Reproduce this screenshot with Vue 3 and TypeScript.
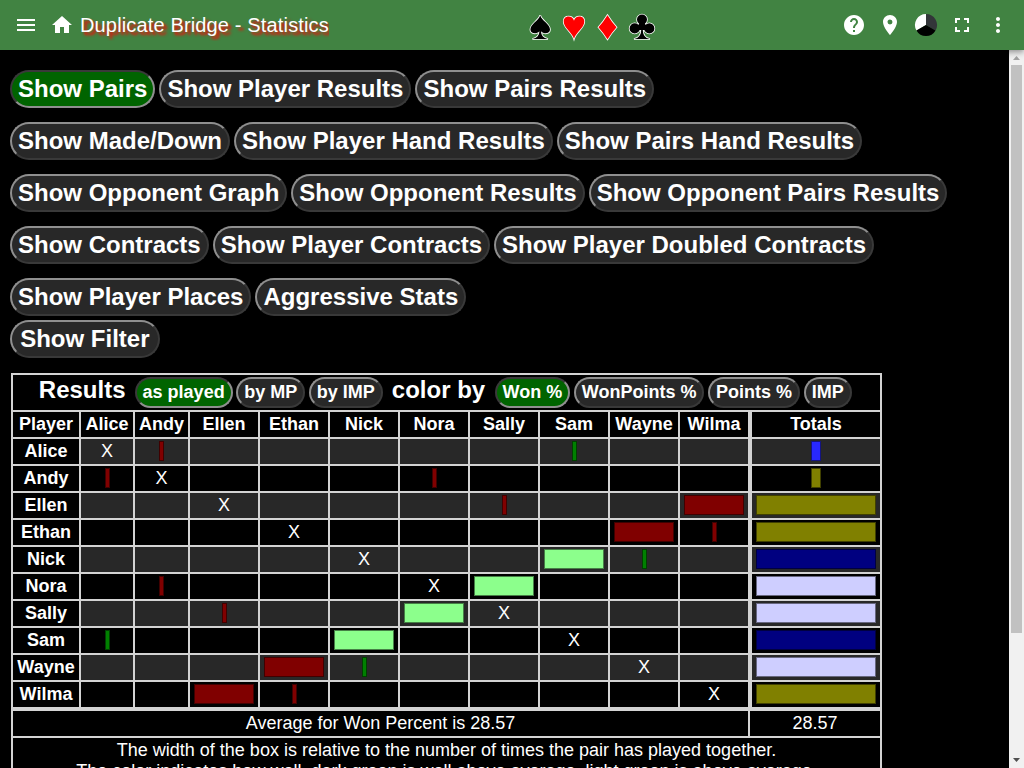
<script setup lang="ts">
interface Btn { label: string; active?: boolean }
interface Cell { kind: 'none' | 'self' | 'box'; width?: number; color?: string }
interface Row { name: string; cells: Cell[]; total: Cell }

const buttonRows: Btn[][] = [
  [{ label: 'Show Pairs', active: true }, { label: 'Show Player Results' }, { label: 'Show Pairs Results' }],
  [{ label: 'Show Made/Down' }, { label: 'Show Player Hand Results' }, { label: 'Show Pairs Hand Results' }],
  [{ label: 'Show Opponent Graph' }, { label: 'Show Opponent Results' }, { label: 'Show Opponent Pairs Results' }],
  [{ label: 'Show Contracts' }, { label: 'Show Player Contracts' }, { label: 'Show Player Doubled Contracts' }],
  [{ label: 'Show Player Places' }, { label: 'Aggressive Stats' }],
]
const scoring: Btn[] = [{ label: 'as played', active: true }, { label: 'by MP' }, { label: 'by IMP' }]
const coloring: Btn[] = [{ label: 'Won %', active: true }, { label: 'WonPoints %' }, { label: 'Points %' }, { label: 'IMP' }]

const names = ['Alice', 'Andy', 'Ellen', 'Ethan', 'Nick', 'Nora', 'Sally', 'Sam', 'Wayne', 'Wilma']
const RED = '#800000'
const GREEN = '#008000'
const LIGHT = '#8cff8c'
// [player, player, box width, color]
const pairs: [string, string, number, string][] = [
  ['Alice', 'Andy', 5, RED],
  ['Alice', 'Sam', 5, GREEN],
  ['Andy', 'Nora', 5, RED],
  ['Ellen', 'Sally', 5, RED],
  ['Ellen', 'Wilma', 60, RED],
  ['Ethan', 'Wayne', 60, RED],
  ['Ethan', 'Wilma', 5, RED],
  ['Nick', 'Sam', 60, LIGHT],
  ['Nick', 'Wayne', 5, GREEN],
  ['Nora', 'Sally', 60, LIGHT],
]
const totals: [number, string][] = [
  [10, '#2828ff'], [10, '#808000'], [120, '#808000'], [120, '#808000'], [120, '#000080'],
  [120, '#ceceff'], [120, '#ceceff'], [120, '#000080'], [120, '#ceceff'], [120, '#808000'],
]
const rows: Row[] = names.map((name, i) => ({
  name,
  cells: names.map((other): Cell => {
    if (other === name) return { kind: 'self' }
    const p = pairs.find(q => (q[0] === name && q[1] === other) || (q[1] === name && q[0] === other))
    return p ? { kind: 'box', width: p[2], color: p[3] } : { kind: 'none' }
  }),
  total: { kind: 'box', width: totals[i][0], color: totals[i][1] },
}))
</script>

<template>
  <div class="page">
    <header class="bar">
      <svg class="icon menu" viewBox="0 0 24 24"><path d="M3 18h18v-2H3v2zm0-5h18v-2H3v2zm0-7v2h18V6H3z" /></svg>
      <svg class="icon home" viewBox="0 0 24 24"><path d="M10 20v-6h4v6h5v-8h3L12 3 2 12h3v8z" /></svg>
      <h1>Duplicate Bridge - Statistics</h1>
      <svg class="suits" viewBox="0 0 140 50">
        <path class="black" d="M20.200 15.200C21.500 20.500 30 24 30 29.500C30 33.800 24 34.600 21 31.200C21.200 35.500 23.500 38 28 39H12.400C16.900 38 19.200 35.500 19.400 31.200C16.400 34.600 10.400 33.800 10.400 29.500C10.400 24 18.900 20.500 20.200 15.200z" />
        <path class="red" d="M54 20.800C54.500 18 57 16.500 59.400 16.500C62.600 16.500 64.300 18.800 64.300 21.500C64.300 28 56 32 54 38.800C52 32 43.700 28 43.700 21.500C43.700 18.800 45.400 16.500 48.600 16.500C51 16.500 53.500 18 54 20.800z" />
        <path class="red" d="M87.500 15.200Q91.500 21.700 96.500 27.300Q91.500 33 87.500 39.200Q83.500 33 78.500 27.300Q83.500 21.700 87.500 15.200z" />
        <path class="black" d="M117 19.500a5 5 0 1 1 10 0a5 5 0 1 1 -10 0zM109.600 28.400a5.100 5.100 0 1 1 10.200 0a5.100 5.100 0 1 1 -10.200 0zM124.200 28.400a5.100 5.100 0 1 1 10.200 0a5.100 5.100 0 1 1 -10.200 0zM119.500 22H124.500L125.500 25L127 28V30H122.800C123 35 125 38 130 39H114C119 38 121 35 121.200 30H117V28L118.500 25z" />
      </svg>
      <div class="actions">
        <svg class="icon" viewBox="0 0 24 24"><path d="M12 2C6.480 2 2 6.480 2 12s4.480 10 10 10 10-4.480 10-10S17.520 2 12 2zm1 17h-2v-2h2v2zm2.070-7.750l-.9.920C13.450 12.900 13 13.500 13 15h-2v-.5c0-1.100.45-2.100 1.170-2.830l1.240-1.260c.37-.36.59-.86.59-1.410 0-1.100-.9-2-2-2s-2 .9-2 2H8c0-2.210 1.790-4 4-4s4 1.790 4 4c0 .88-.36 1.680-.93 2.250z" /></svg>
        <svg class="icon" viewBox="0 0 24 24"><path d="M12 2C8.130 2 5 5.130 5 9c0 5.250 7 13 7 13s7-7.750 7-13c0-3.870-3.130-7-7-7zm0 9.500a2.500 2.500 0 0 1 0-5 2.500 2.500 0 0 1 0 5z" /></svg>
        <svg class="icon" viewBox="0 0 24 24">
          <path fill="#fff" d="M12 12V1A11 11 0 0 0 2.470 17.500z" />
          <path fill="#333639" d="M12 12V1A11 11 0 0 1 21.530 17.500z" />
          <path fill="#000" d="M12 12L2.470 17.500A11 11 0 0 0 21.530 17.500z" />
        </svg>
        <svg class="icon" viewBox="0 0 24 24"><path d="M7 14H5v5h5v-2H7v-3zm-2-4h2V7h3V5H5v5zm12 7h-3v2h5v-5h-2v3zM14 5v2h3v3h2V5h-5z" /></svg>
        <svg class="icon" viewBox="0 0 24 24"><path d="M12 8c1.100 0 2-.9 2-2s-.9-2-2-2-2 .9-2 2 .9 2 2 2zm0 2c-1.100 0-2 .9-2 2s.9 2 2 2 2-.9 2-2-.9-2-2-2zm0 6c-1.100 0-2 .9-2 2s.9 2 2 2 2-.9 2-2-.9-2-2-2z" /></svg>
      </div>
    </header>

    <div class="body">
      <main>
        <div v-for="(r, i) in buttonRows" :key="i" class="btn-row">
          <button v-for="b in r" :key="b.label" :class="{ active: b.active }">{{ b.label }}</button>
        </div>
        <div class="btn-row filter"><button>Show Filter</button></div>

        <div class="stats">
          <div class="cell caption">
            <span class="big">Results</span>
            <div class="group">
              <button v-for="b in scoring" :key="b.label" :class="{ active: b.active }">{{ b.label }}</button>
            </div>
            <span class="big">color by</span>
            <div class="group">
              <button v-for="b in coloring" :key="b.label" :class="{ active: b.active }">{{ b.label }}</button>
            </div>
          </div>
          <div class="line head">
            <div class="cell">Player</div>
            <div v-for="n in names" :key="n" class="cell">{{ n }}</div>
            <div class="cell total">Totals</div>
          </div>
          <div v-for="(row, i) in rows" :key="row.name" class="line" :class="{ odd: i % 2 === 0 }">
            <div class="cell name">{{ row.name }}</div>
            <div v-for="(c, j) in row.cells" :key="j" class="cell data">
              <template v-if="c.kind === 'self'">X</template>
              <i v-else-if="c.kind === 'box'" class="box" :style="{ width: c.width + 'px', backgroundColor: c.color }"></i>
            </div>
            <div class="cell data total">
              <i class="box" :style="{ width: row.total.width + 'px', backgroundColor: row.total.color }"></i>
            </div>
          </div>
          <div class="average">
            <div class="cell">Average for Won Percent is 28.57</div>
            <div class="cell">28.57</div>
          </div>
          <div class="cell note">
            The width of the box is relative to the number of times the pair has played together.<br />
            The color indicates how well, dark green is well above average, light green is above average,
          </div>
        </div>
      </main>
      <div class="scrollbar">
        <svg viewBox="0 0 15 15"><path fill="#a3a3a3" d="M4 10l3.500-4 3.500 4z" /></svg>
        <div class="thumb"></div>
        <svg viewBox="0 0 15 15"><path fill="#505050" d="M4 5l3.500 4L11 5z" /></svg>
      </div>
    </div>
  </div>
</template>

<style>
html, body { background: #000; overflow: hidden; }
</style>

<style scoped>
.page {
  width: 1024px;
  height: 768px;
  display: flex;
  flex-direction: column;
  overflow: hidden;
  background: #000;
  color: #fff;
  font-family: "Liberation Sans", Arial, sans-serif;
}
.bar {
  flex: none;
  position: relative;
  z-index: 1;
  box-sizing: border-box;
  height: 50px;
  padding: 0 14px;
  display: flex;
  align-items: center;
  background: #418342;
  box-shadow: 0 2px 4px -1px rgba(0, 0, 0, 0.2), 0 4px 5px rgba(0, 0, 0, 0.14), 0 1px 10px rgba(0, 0, 0, 0.12);
}
.icon { width: 24px; height: 24px; flex: none; fill: #fff; }
.home { margin-left: 12px; }
h1 {
  margin: 0 0 0 6px;
  line-height: 32px;
  font-size: 20px;
  font-weight: 400;
  letter-spacing: 0.15px;
  white-space: nowrap;
  overflow: hidden;
  text-shadow: 3px 3px 3px #f00;
}
.suits { width: 140px; height: 50px; margin-left: auto; }
.suits path { stroke: #fff; stroke-width: 1.6px; paint-order: stroke; }
.black { fill: #000; }
.red { fill: #f00; }
.actions { margin-left: 182px; display: flex; gap: 12px; }

.body { flex: 1; min-height: 0; display: flex; }
main { flex: 1; min-width: 0; padding: 20px 0 0 10px; overflow: hidden; }
.btn-row { display: flex; gap: 4px; margin-bottom: 14px; }
.btn-row:nth-child(5) { margin-bottom: 4px; }
button {
  box-sizing: border-box;
  height: 38px;
  margin: 0;
  padding: 0 6px 1px;
  border: 2px solid;
  border-color: #8f8f8f #393939 #393939 #8f8f8f;
  border-radius: 19px;
  background: #282828;
  color: #fff;
  font: bold 24px/28px "Liberation Sans", Arial, sans-serif;
  white-space: nowrap;
}
button.active {
  background: #006400;
  border-color: #393939 #8f8f8f #8f8f8f #393939;
}
.filter { margin-bottom: 15px; }
.filter button { padding: 0 8.6px 1px 8.2px; }

.stats {
  width: 867px;
  margin-left: 1px;
  padding: 2px;
  background: #d3d3d3;
  display: flex;
  flex-direction: column;
  gap: 2px;
  font-size: 18px;
  line-height: 21px;
}
.cell {
  background: #000;
  display: flex;
  align-items: center;
  justify-content: center;
  white-space: nowrap;
}
.line {
  display: grid;
  grid-template-columns: 66px 52px 53px repeat(8, 68px) 130px;
  column-gap: 2px;
  height: 25px;
}
.line .total { margin-left: 2px; }
.head, .name { font-weight: bold; }
.odd .data { background: #282828; }
.box {
  box-sizing: border-box;
  height: 20px;
  margin-bottom: 1px;
  border: 1px solid rgba(0, 0, 0, 0.5);
}
.caption { height: 35px; justify-content: flex-start; padding-left: 25.8px; }
.caption button { height: 31px; font-size: 18px; line-height: 21px; border-radius: 16px; }
.big { font-size: 24px; font-weight: bold; line-height: 28px; padding-bottom: 6px; }
.group { display: flex; gap: 3.6px; margin: 0 9px 0 9.1px; }
.group:last-child { margin-left: 9.3px; }
.average {
  display: grid;
  grid-template-columns: 735px 130px;
  column-gap: 2px;
  height: 25px;
  margin-top: 2px;
}
.note { text-align: center; height: 60px; align-items: flex-start; padding-top: 2px; }

.scrollbar {
  width: 15px;
  background: #f1f1f1;
  display: flex;
  flex-direction: column;
  align-items: center;
}
.scrollbar svg { width: 15px; height: 15px; }
.thumb { width: 11px; height: 568px; background: #c1c1c1; margin-bottom: auto; }
</style>
